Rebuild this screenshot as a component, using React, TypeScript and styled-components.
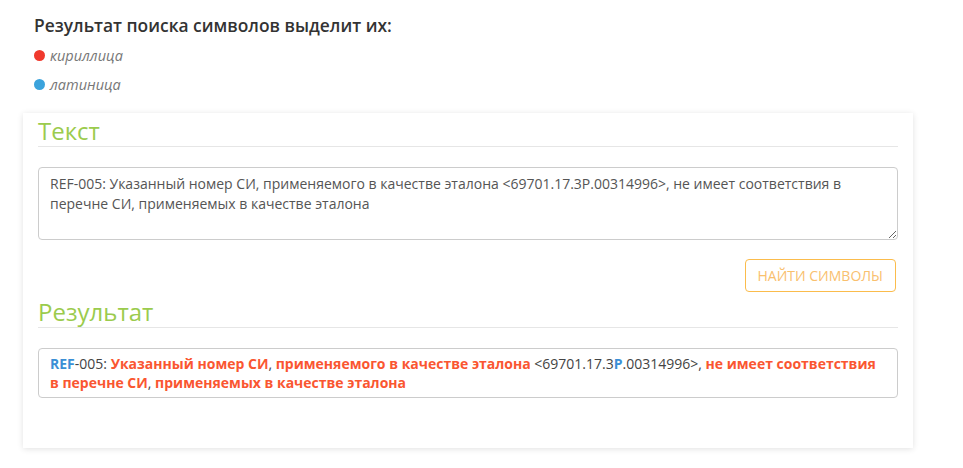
import React from "react";
import styled, { createGlobalStyle } from "styled-components";

const Global = createGlobalStyle`
  html, body { margin: 0; padding: 0; background: #fff; }
  body { font-family: "Open Sans", "Noto Sans", sans-serif; color: #333; }
`;

const Page = styled.div`
  padding: 14px 50px 20px 23px;
`;

const Legend = styled.div`
  padding-left: 11px;
`;

const Title = styled.h3`
  margin: 0 0 5px;
  font-size: 17.4px;
  line-height: 22px;
  font-weight: 600;
  color: #333;
`;

const LegendRow = styled.div`
  display: flex;
  align-items: center;
  gap: 5px;
  height: 29px;
  font-size: 14.5px;
  font-style: italic;
  color: #777;
`;

const Dot = styled.span<{ $color: string }>`
  width: 11px;
  height: 11px;
  border-radius: 50%;
  background: ${(p) => p.$color};
  margin-top: -1px;
`;

const Card = styled.div`
  margin-top: 14px;
  width: 890px;
  box-sizing: border-box;
  background: #fff;
  padding: 4px 15px 50px;
  box-shadow: 0 1px 6px rgba(0, 0, 0, 0.12);
`;

const SectionTitle = styled.h2`
  margin: 0 0 20px;
  font-size: 24px;
  line-height: 28px;
  font-weight: 400;
  color: #9bcb4d;
  border-bottom: 1px solid #e6e6e6;
  padding-bottom: 1px;
`;

const TextArea = styled.textarea`
  display: block;
  width: 100%;
  box-sizing: border-box;
  height: 73px;
  padding: 6px 11px;
  font-family: "Open Sans", "Noto Sans", sans-serif;
  font-size: 14px;
  line-height: 20px;
  color: #555;
  border: 1px solid #ccc;
  border-radius: 4px;
  resize: vertical;
  outline: none;
`;

const Actions = styled.div`
  display: flex;
  justify-content: flex-end;
  padding: 19px 2px 6px 0;
`;

const Button = styled.button`
  height: 33px;
  padding: 0 12px;
  background: #fff;
  border: 1px solid #fbbc4c;
  border-radius: 4px;
  color: #f9c06e;
  font-family: "Open Sans", "Noto Sans", sans-serif;
  font-size: 14px;
  cursor: pointer;
`;

const Result = styled.div`
  box-sizing: border-box;
  padding: 5px 11px;
  border: 1px solid #ccc;
  border-radius: 4px;
  font-size: 14px;
  line-height: 19px;
  color: #444;
`;

const Cyr = styled.span`
  color: #fa5631;
  font-weight: 700;
`;

const Lat = styled.span`
  color: #3b8fd5;
  font-weight: 700;
`;

export default function App() {
  return (
    <>
      <Global />
      <Page>
        <Legend>
          <Title>Результат поиска символов выделит их:</Title>
          <LegendRow>
            <Dot $color="#f0392d" />
            кириллица
          </LegendRow>
          <LegendRow>
            <Dot $color="#3ba3dc" />
            латиница
          </LegendRow>
        </Legend>
        <Card>
          <SectionTitle>Текст</SectionTitle>
          <TextArea
            defaultValue="REF-005: Указанный номер СИ, применяемого в качестве эталона <69701.17.3P.00314996>, не имеет соответствия в перечне СИ, применяемых в качестве эталона"
          />
          <Actions>
            <Button>НАЙТИ СИМВОЛЫ</Button>
          </Actions>
          <SectionTitle>Результат</SectionTitle>
          <Result>
            <Lat>REF</Lat>-005: <Cyr>Указанный</Cyr> <Cyr>номер</Cyr> <Cyr>СИ</Cyr>,{" "}
            <Cyr>применяемого</Cyr> <Cyr>в</Cyr> <Cyr>качестве</Cyr> <Cyr>эталона</Cyr>{" "}
            &lt;69701.17.3<Lat>P</Lat>.00314996&gt;, <Cyr>не</Cyr> <Cyr>имеет</Cyr>{" "}
            <Cyr>соответствия</Cyr> <Cyr>в</Cyr> <Cyr>перечне</Cyr> <Cyr>СИ</Cyr>,{" "}
            <Cyr>применяемых</Cyr> <Cyr>в</Cyr> <Cyr>качестве</Cyr> <Cyr>эталона</Cyr>
          </Result>
        </Card>
      </Page>
    </>
  );
}
